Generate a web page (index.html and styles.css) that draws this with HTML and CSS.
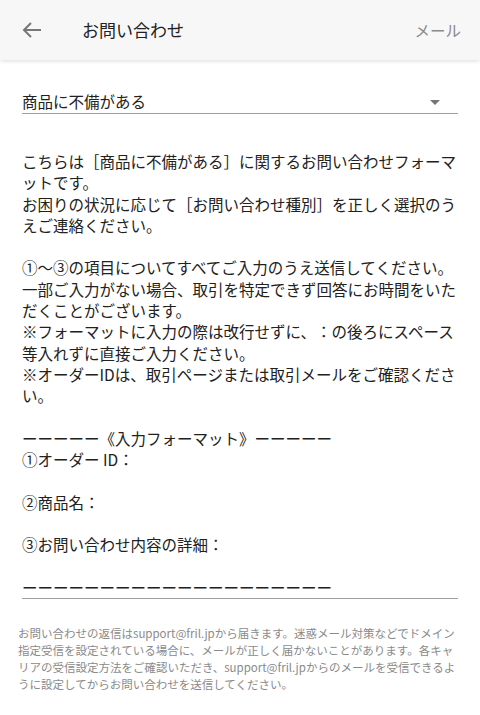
FILE: index.html
```html
<!DOCTYPE html>
<html lang="ja">
<head>
<meta charset="utf-8">
<title>お問い合わせ</title>
<link rel="stylesheet" href="styles.css">
</head>
<body>
<header class="appbar">
  <svg class="back" width="20" height="16" viewBox="0 0 20 16" aria-hidden="true"><path d="M19 8H2M9 1L2 8l7 7" fill="none" stroke="#777" stroke-width="2"/></svg>
  <h1 class="title">お問い合わせ</h1>
  <span class="action">メール</span>
</header>
<main class="form">
  <div class="select">
    <span class="select-text">商品に不備がある</span>
    <span class="caret"></span>
  </div>
  <div class="body">こちらは［商品に不備がある］に関するお問い合わせフォーマットです。
お困りの状況に応じて［お問い合わせ種別］を正しく選択のうえご連絡ください。

①～③の項目についてすべてご入力のうえ送信してください。
一部ご入力がない場合、取引を特定できず回答にお時間をいただくことがございます。
※フォーマットに入力の際は改行せずに、：の後ろにスペース等入れずに直接ご入力ください。
※オーダーIDは、取引ページまたは取引メールをご確認ください。

ーーーーー《入力フォーマット》ーーーーー
①オーダー ID：

②商品名：

③お問い合わせ内容の詳細：

ーーーーーーーーーーーーーーーーーーーー</div>
</main>
<footer class="note">お問い合わせの返信はsupport@fril.jpから届きます。迷惑メール対策などでドメイン指定受信を設定されている場合に、メールが正しく届かないことがあります。各キャリアの受信設定方法をご確認いただき、support@fril.jpからのメールを受信できるように設定してからお問い合わせを送信してください。</footer>
</body>
</html>
```

FILE: styles.css
```css
html, body {
  margin: 0;
  padding: 0;
  background: #ffffff;
}
body {
  font-family: "Noto Sans CJK JP", "Noto Sans", sans-serif;
  color: #212121;
  width: 480px;
  line-break: loose;
}
.appbar {
  height: 60px;
  background: #f7f7f7;
  box-shadow: 0 1px 4px rgba(0, 0, 0, 0.14);
  display: flex;
  align-items: center;
  padding: 0 19px 0 22px;
  position: relative;
}
.back {
  display: block;
  flex: none;
}
.title {
  margin: 0 0 0 40px;
  font-size: 17px;
  font-weight: 400;
  color: #212121;
  line-height: 24px;
}
.action {
  margin-left: auto;
  font-size: 15.5px;
  color: #8a8a8a;
  line-height: 24px;
}
.form {
  padding: 0 22px;
}
.select {
  margin-top: 26px;
  padding-top: 3px;
  height: 24px;
  border-bottom: 1px solid #9e9e9e;
  display: flex;
  align-items: center;
  justify-content: space-between;
}
.select-text {
  font-size: 15.5px;
  line-height: 24px;
  color: #212121;
}
.caret {
  width: 0;
  height: 0;
  border-left: 5px solid transparent;
  border-right: 5px solid transparent;
  border-top: 5px solid #757575;
  margin-right: 18px;
  margin-top: 2px;
}
.body {
  margin-top: 37px;
  font-size: 15.5px;
  line-height: 21.3px;
  white-space: pre-wrap;
  text-spacing-trim: space-all;
  color: #212121;
  border-bottom: 1px solid #9e9e9e;
}
.note {
  margin-top: 26px;
  padding: 0 18px;
  font-size: 11.5px;
  line-height: 17px;
  color: #8a8a8a;
}
```
